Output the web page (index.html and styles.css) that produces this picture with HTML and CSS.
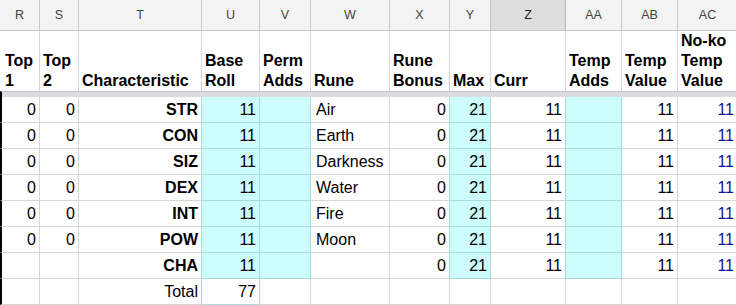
FILE: index.html
```html
<!DOCTYPE html>
<html lang="en">
<head>
    <meta charset="UTF-8">
    <title>Characteristics</title>
    <link rel="stylesheet" href="styles.css">
</head>
<body>
    <div class="sheet">
        <!-- column letters -->
        <div class="col">R</div>
        <div class="col">S</div>
        <div class="col">T</div>
        <div class="col">U</div>
        <div class="col">V</div>
        <div class="col">W</div>
        <div class="col">X</div>
        <div class="col">Y</div>
        <div class="col sel">Z</div>
        <div class="col">AA</div>
        <div class="col">AB</div>
        <div class="col">AC</div>

        <!-- frozen header row -->
        <div class="head first">Top 1</div>
        <div class="head">Top 2</div>
        <div class="head">Characteristic</div>
        <div class="head">Base Roll</div>
        <div class="head">Perm Adds</div>
        <div class="head">Rune</div>
        <div class="head">Rune Bonus</div>
        <div class="head">Max</div>
        <div class="head">Curr</div>
        <div class="head">Temp Adds</div>
        <div class="head">Temp Value</div>
        <div class="head">No-ko Temp Value</div>

        <div class="freeze"></div>

        <!-- STR -->
        <div class="cell num first">0</div>
        <div class="cell num">0</div>
        <div class="cell num b pre">STR</div>
        <div class="cell num cy">11</div>
        <div class="cell cy"></div>
        <div class="cell txt">Air</div>
        <div class="cell num pre">0</div>
        <div class="cell num cy">21</div>
        <div class="cell num pre">11</div>
        <div class="cell cy"></div>
        <div class="cell num">11</div>
        <div class="cell num blue">11</div>

        <!-- CON -->
        <div class="cell num first">0</div>
        <div class="cell num">0</div>
        <div class="cell num b pre">CON</div>
        <div class="cell num cy">11</div>
        <div class="cell cy"></div>
        <div class="cell txt">Earth</div>
        <div class="cell num pre">0</div>
        <div class="cell num cy">21</div>
        <div class="cell num pre">11</div>
        <div class="cell cy"></div>
        <div class="cell num">11</div>
        <div class="cell num blue">11</div>

        <!-- SIZ -->
        <div class="cell num first">0</div>
        <div class="cell num">0</div>
        <div class="cell num b pre">SIZ</div>
        <div class="cell num cy">11</div>
        <div class="cell cy"></div>
        <div class="cell txt">Darkness</div>
        <div class="cell num pre">0</div>
        <div class="cell num cy">21</div>
        <div class="cell num pre">11</div>
        <div class="cell cy"></div>
        <div class="cell num">11</div>
        <div class="cell num blue">11</div>

        <!-- DEX -->
        <div class="cell num first">0</div>
        <div class="cell num">0</div>
        <div class="cell num b pre">DEX</div>
        <div class="cell num cy">11</div>
        <div class="cell cy"></div>
        <div class="cell txt">Water</div>
        <div class="cell num pre">0</div>
        <div class="cell num cy">21</div>
        <div class="cell num pre">11</div>
        <div class="cell cy"></div>
        <div class="cell num">11</div>
        <div class="cell num blue">11</div>

        <!-- INT -->
        <div class="cell num first">0</div>
        <div class="cell num">0</div>
        <div class="cell num b pre">INT</div>
        <div class="cell num cy">11</div>
        <div class="cell cy"></div>
        <div class="cell txt">Fire</div>
        <div class="cell num pre">0</div>
        <div class="cell num cy">21</div>
        <div class="cell num pre">11</div>
        <div class="cell cy"></div>
        <div class="cell num">11</div>
        <div class="cell num blue">11</div>

        <!-- POW -->
        <div class="cell num first">0</div>
        <div class="cell num">0</div>
        <div class="cell num b pre">POW</div>
        <div class="cell num cy">11</div>
        <div class="cell cy"></div>
        <div class="cell txt">Moon</div>
        <div class="cell num pre">0</div>
        <div class="cell num cy">21</div>
        <div class="cell num pre">11</div>
        <div class="cell cy"></div>
        <div class="cell num">11</div>
        <div class="cell num blue">11</div>

        <!-- CHA -->
        <div class="cell num first"></div>
        <div class="cell num"></div>
        <div class="cell num b pre">CHA</div>
        <div class="cell num cy">11</div>
        <div class="cell cy"></div>
        <div class="cell txt"></div>
        <div class="cell num pre">0</div>
        <div class="cell num cy">21</div>
        <div class="cell num pre">11</div>
        <div class="cell cy"></div>
        <div class="cell num">11</div>
        <div class="cell num blue">11</div>

        <!-- total -->
        <div class="cell num first"></div>
        <div class="cell num"></div>
        <div class="cell num pre">Total</div>
        <div class="cell num edge">77</div>
        <div class="cell"></div>
        <div class="cell"></div>
        <div class="cell"></div>
        <div class="cell"></div>
        <div class="cell"></div>
        <div class="cell"></div>
        <div class="cell"></div>
        <div class="cell"></div>
    </div>
</body>
</html>
```
FILE: styles.css
```css
* {
    margin: 0;
    padding: 0;
    box-sizing: border-box;
}

body {
    width: 736px;
    height: 305px;
    overflow: hidden;
    background: #fff;
    font-family: "Liberation Sans", Arial, sans-serif;
    color: #000;
}

.sheet {
    display: grid;
    grid-template-columns: 40px 39px 123px 58px 51px 79px 60px 41px 75px 56px 56px 60px;
    grid-template-rows: 31px 60px 6px repeat(8, 26px);
}

/* column letters */
.col {
    display: flex;
    align-items: center;
    justify-content: center;
    font-size: 12.5px;
    color: #444;
    background-color: #f3f3f3;
    border-right: 1px solid #c8c8c8;
    border-bottom: 1px solid #c8c8c8;
}

.col.sel {
    background-color: #dddddd;
    border-right-color: #b8b8b8;
    color: #222;
}

/* frozen header row */
.head {
    display: flex;
    align-items: flex-end;
    padding: 0 3px;
    font-size: 16px;
    font-weight: bold;
    line-height: 20px;
    border-right: 1px solid #d6d6d6;
    overflow: hidden;
}

.head.first {
    padding-left: 5px;
}

.freeze {
    grid-column: 1 / -1;
    background-color: #dadce0;
    border-top: 1px solid #c4c6cb;
    border-left: 2px solid #000;
}

/* body cells */
.cell {
    padding: 0 3px;
    font-size: 16px;
    line-height: 25px;
    white-space: nowrap;
    overflow: hidden;
    border-right: 1px solid #d6d6d6;
    border-bottom: 1px solid #d6d6d6;
}

.cell.first {
    border-left: 2px solid #000;
}

.num {
    text-align: right;
}

.txt {
    padding-left: 5px;
}

.b {
    font-weight: bold;
}

.cy {
    background-color: #ccfcfc;
    border-right-color: #a8dcdc;
    border-bottom-color: #a8dcdc;
}

.pre {
    border-right-color: #a8dcdc;
}

.edge {
    border-right-color: #a8dcdc;
    border-bottom-color: #a8dcdc;
}

.blue {
    color: #14148c;
}
```
